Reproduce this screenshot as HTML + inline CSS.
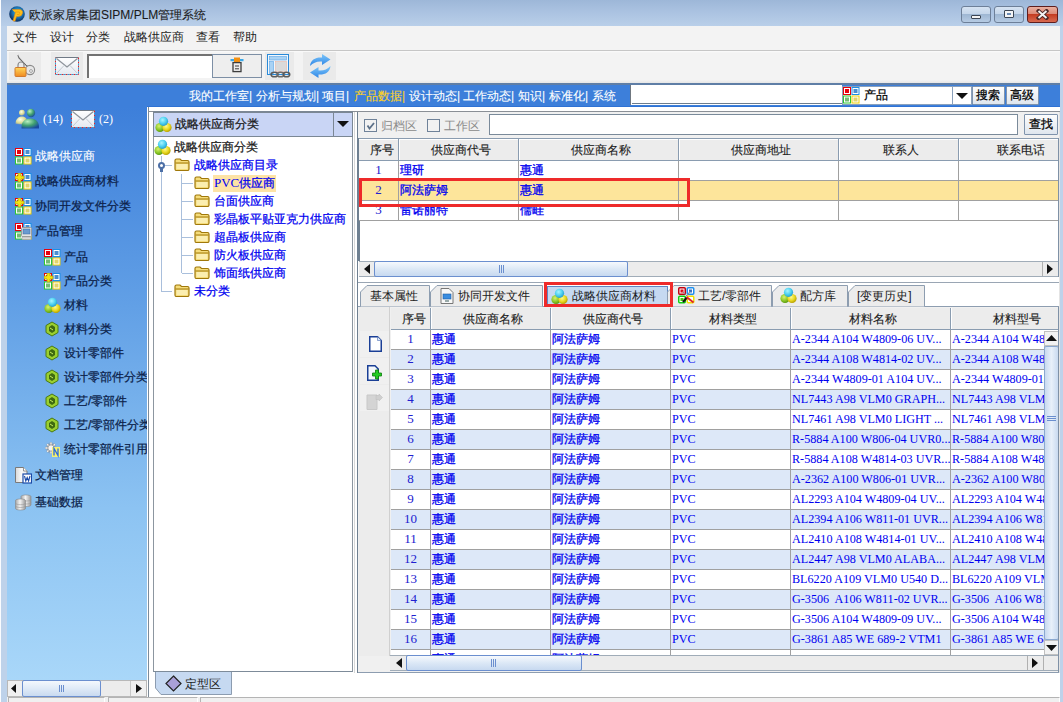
<!DOCTYPE html><html><head><meta charset="utf-8"><style>
*{box-sizing:border-box;margin:0;padding:0}
html,body{width:1063px;height:702px;overflow:hidden}
body{position:relative;background:#c4d8ee;font-family:"Liberation Sans",sans-serif;font-size:12px;color:#000}
.ab{position:absolute}
.t{position:absolute;white-space:nowrap;line-height:14px;font-size:12px;-webkit-text-stroke:0.25px currentColor}
.serif{font-family:"Liberation Serif",serif;-webkit-text-stroke:0}
.ts{font-size:13px;transform:scaleX(0.935);transform-origin:0 0}
.cj{-webkit-text-stroke:0.3px currentColor}
</style></head><body>
<svg width="0" height="0" style="position:absolute"><defs><radialGradient id="gG" cx="40%" cy="35%" r="65%"><stop offset="0" stop-color="#d8f070"/><stop offset="0.6" stop-color="#8cc828"/><stop offset="1" stop-color="#5a9a10"/></radialGradient><radialGradient id="gY" cx="40%" cy="35%" r="65%"><stop offset="0" stop-color="#fffa90"/><stop offset="0.6" stop-color="#e8d820"/><stop offset="1" stop-color="#b8a000"/></radialGradient><radialGradient id="gC" cx="40%" cy="35%" r="65%"><stop offset="0" stop-color="#a8f4ff"/><stop offset="0.6" stop-color="#4cd0f0"/><stop offset="1" stop-color="#2aa0d0"/></radialGradient></defs></svg>
<div class="ab" style="left:0;top:0;width:1063px;height:702px;background:#bed2ea"></div>
<div class="ab" style="left:0;top:0;width:1063px;height:26px;background:linear-gradient(180deg,#9db7d8 0,#a9c1e0 40%,#b9cfe9 100%)"></div>
<div class="ab" style="left:0;top:0;width:1px;height:702px;background:#fafcff"></div>
<svg class="ab" style="left:9px;top:6px" width="16" height="16" viewBox="0 0 16 16"><defs><radialGradient id="lg" cx="55%" cy="40%" r="60%"><stop offset="0" stop-color="#33c8f0"/><stop offset="0.6" stop-color="#1a6aa8"/><stop offset="1" stop-color="#0a2a5a"/></radialGradient></defs><circle cx="8" cy="8" r="7.8" fill="url(#lg)"/><path d="M3 3.5 H10 Q14 3.5 13.5 7 Q13 10.5 9 10.5 H7.5 L6 15 H4 L6.5 6 H9.5 Q11 6 10.8 7.5 Q10.6 8.5 9.5 8.5 H8" fill="#fcc01a" stroke="#e88a10" stroke-width="0.6"/></svg>
<div class="t" style="left:29px;top:8px;color:#1b1b1b;-webkit-text-stroke:0.1px currentColor">欧派家居集团SIPM/PLM管理系统</div>
<div class="ab" style="left:961px;top:6px;width:30px;height:17px;border:1px solid #6d7f98;border-radius:3px;background:linear-gradient(#d6e3f2 0,#c5d6ea 45%,#9fb7d3 50%,#b6cbe3 100%)"></div>
<div class="ab" style="left:994px;top:6px;width:30px;height:17px;border:1px solid #6d7f98;border-radius:3px;background:linear-gradient(#d6e3f2 0,#c5d6ea 45%,#9fb7d3 50%,#b6cbe3 100%)"></div>
<div class="ab" style="left:1027px;top:6px;width:31px;height:17px;border:1px solid #5e1e1e;border-radius:3px;background:linear-gradient(#eab0a0 0,#dc8a78 45%,#c43c22 50%,#d86a50 100%)"></div>
<div class="ab" style="left:971px;top:15px;width:10px;height:4px;background:#f4f4f4;border:1px solid #3c4654;border-radius:1px"></div>
<div class="ab" style="left:1004px;top:10px;width:10px;height:8px;background:#f4f4f4;border:1px solid #3c4654;border-radius:1px"></div>
<div class="ab" style="left:1007px;top:13px;width:4px;height:2px;background:#6c8cb4"></div>
<svg class="ab" style="left:1036px;top:9px" width="13" height="11" viewBox="0 0 13 11"><path d="M2.5 2 L10.5 9 M10.5 2 L2.5 9" stroke="#4a2626" stroke-width="3.8" stroke-linecap="square"/><path d="M2.5 2 L10.5 9 M10.5 2 L2.5 9" stroke="#f4f4f4" stroke-width="2"/></svg>
<div class="ab" style="left:7px;top:26px;width:1053px;height:25px;background:#f3f3f3;border-bottom:1px solid #c6c6c6"></div>
<div class="t" style="left:13px;top:30px;color:#1e1e1e;-webkit-text-stroke:0">文件</div>
<div class="t" style="left:50px;top:30px;color:#1e1e1e;-webkit-text-stroke:0">设计</div>
<div class="t" style="left:86px;top:30px;color:#1e1e1e;-webkit-text-stroke:0">分类</div>
<div class="t" style="left:124px;top:30px;color:#1e1e1e;-webkit-text-stroke:0">战略供应商</div>
<div class="t" style="left:196px;top:30px;color:#1e1e1e;-webkit-text-stroke:0">查看</div>
<div class="t" style="left:233px;top:30px;color:#1e1e1e;-webkit-text-stroke:0">帮助</div>
<div class="ab" style="left:7px;top:51px;width:1053px;height:32px;background:linear-gradient(#fbfbfb 0,#f3f3f3 2px,#f3f3f3 29px,#e6e6e6 32px)"></div>
<div class="ab" style="left:9px;top:52px;width:32px;height:28px;background:#eaeaea"></div>
<div class="ab" style="left:51px;top:52px;width:32px;height:28px;background:#eaeaea"></div>
<div class="ab" style="left:265px;top:52px;width:29px;height:28px;background:#eaeaea"></div>
<div class="ab" style="left:303px;top:52px;width:33px;height:28px;background:#eaeaea"></div>
<svg class="ab" style="left:14px;top:54px" width="22" height="24" viewBox="0 0 22 24"><path d="M4 1 L5 4 L14 13" stroke="#6a6a6a" stroke-width="1.3" fill="none"/><path d="M4.5 1.5 L13 11" stroke="#e8e8e8" stroke-width="1" fill="none"/><circle cx="16" cy="16" r="4.6" fill="#e6e6e6" stroke="#8a8a8a" stroke-width="1.1"/><circle cx="17" cy="17" r="1.4" fill="#fff" stroke="#8a8a8a" stroke-width="0.8"/><path d="M4 13 V11 a3 3 0 0 1 6 0 v2" stroke="#8a8a8a" stroke-width="1.2" fill="none"/><defs><linearGradient id="lk" x1="0" y1="0" x2="0" y2="1"><stop offset="0" stop-color="#ffd75a"/><stop offset="1" stop-color="#f08a20"/></linearGradient></defs><rect x="1" y="13.5" width="11" height="9" rx="1" fill="url(#lk)" stroke="#d07a30" stroke-width="1"/></svg>
<svg class="ab" style="left:55px;top:57px" width="24" height="18" viewBox="0 0 24 18"><defs><linearGradient id="eg" x1="0" y1="0" x2="0" y2="1"><stop offset="0" stop-color="#ffffff"/><stop offset="1" stop-color="#e4e9f0"/></linearGradient></defs><rect x="0.5" y="0.5" width="23" height="17" fill="url(#eg)"/><path d="M0.5 17.5 V0.5 M23.5 0.5 V17.5 H0.5" fill="none" stroke="#e8202a" stroke-width="1" stroke-dasharray="2 2"/><path d="M0.5 17.5 V0.5 M23.5 0.5 V17.5 H0.5" fill="none" stroke="#2fa0d8" stroke-width="1" stroke-dasharray="2 2" stroke-dashoffset="2"/><path d="M0.5 0.5 H23.5" stroke="#707a86" stroke-width="1"/><path d="M1.5 1.5 L12 10 L22.5 1.5" fill="none" stroke="#8e949c" stroke-width="1.3"/><path d="M2 16 L9 8.5 M22 16 L15 8.5" stroke="#c4cad2" stroke-width="1"/></svg>
<div class="ab" style="left:87px;top:54px;width:126px;height:24px;background:#fff;border-top:2px solid #727272;border-left:2px solid #727272"></div>
<div class="ab" style="left:212px;top:54px;width:50px;height:24px;background:#eeeeee;border:1px solid #7d8fa5"></div>
<svg class="ab" style="left:230px;top:57px" width="14" height="16" viewBox="0 0 14 16"><rect x="0.5" y="2" width="13" height="2.2" fill="#3aa8e8"/><rect x="4" y="0.5" width="6" height="5" fill="#f39010"/><rect x="3" y="5.6" width="8" height="9" fill="#ececec" stroke="#3c3c3c" stroke-width="1.3"/><path d="M5 9 h4 M5 11.8 h4" stroke="#3c3c3c" stroke-width="1"/></svg>
<svg class="ab" style="left:267px;top:54px" width="24" height="24" viewBox="0 0 24 24"><rect x="0.5" y="0.5" width="21" height="20" fill="#f2f7fc" stroke="#2a8ad8"/><rect x="2.5" y="2.5" width="17" height="3.5" fill="#a9d2f4" stroke="#5aa6e6" stroke-width="0.6"/><rect x="2.5" y="7.5" width="4" height="12" fill="#a9d2f4" stroke="#5aa6e6" stroke-width="0.6"/><rect x="8.5" y="7.5" width="11" height="10" fill="#dadada" stroke="#e8b8a8" stroke-width="0.6"/><ellipse cx="7.5" cy="20.5" rx="3.4" ry="2.3" fill="none" stroke="#5a5a5a" stroke-width="1.6"/><ellipse cx="13.5" cy="20.5" rx="3.4" ry="2.3" fill="none" stroke="#6a6a6a" stroke-width="1.6"/><ellipse cx="19.5" cy="20.5" rx="3.2" ry="2.3" fill="none" stroke="#5a5a5a" stroke-width="1.6"/></svg>
<svg class="ab" style="left:309px;top:54px" width="23" height="24" viewBox="0 0 23 24"><defs><linearGradient id="rf" x1="0" y1="0" x2="0" y2="1"><stop offset="0" stop-color="#7cc6fa"/><stop offset="1" stop-color="#2f86e6"/></linearGradient></defs><path d="M1 12 C1.5 5.5 7 3 13 3.5 L13 0 L21.5 5.5 L13 11 L13 7.5 C8 7 4.5 8.5 1 12 Z" fill="url(#rf)"/><path d="M21.5 12 C21 18.5 15.5 21 9.5 20.5 L9.5 24 L1 18.5 L9.5 13 L9.5 16.5 C14.5 17 18 15.5 21.5 12 Z" fill="url(#rf)"/></svg>
<div class="ab" style="left:7px;top:83px;width:1053px;height:2px;background:#5f7ea6"></div>
<div class="ab" style="left:7px;top:85px;width:1053px;height:22px;background:#3d7fda"></div>
<div class="ab" style="left:147px;top:106px;width:913px;height:1px;background:#2f72d4"></div>
<div class="ab" style="left:7px;top:107px;width:140px;height:573px;background:linear-gradient(#3d7fda 0%,#62a0e6 35%,#8cc3f2 70%,#a9d7f9 100%)"></div>
<div class="ab" style="left:147px;top:107px;width:913px;height:591px;background:#fff"></div>
<div class="t" style="left:189px;top:89px;color:#fff;-webkit-text-stroke:0.1px currentColor">我的工作室|</div>
<div class="t" style="left:256px;top:89px;color:#fff;-webkit-text-stroke:0.1px currentColor">分析与规划|</div>
<div class="t" style="left:322px;top:89px;color:#fff;-webkit-text-stroke:0.1px currentColor">项目|</div>
<div class="t" style="left:354px;top:89px;color:#ffd21c;-webkit-text-stroke:0.1px currentColor">产品数据|</div>
<div class="t" style="left:409px;top:89px;color:#fff;-webkit-text-stroke:0.1px currentColor">设计动态|</div>
<div class="t" style="left:463px;top:89px;color:#fff;-webkit-text-stroke:0.1px currentColor">工作动态|</div>
<div class="t" style="left:518px;top:89px;color:#fff;-webkit-text-stroke:0.1px currentColor">知识|</div>
<div class="t" style="left:549px;top:89px;color:#fff;-webkit-text-stroke:0.1px currentColor">标准化|</div>
<div class="t" style="left:592px;top:89px;color:#fff;-webkit-text-stroke:0.1px currentColor">系统</div>
<div class="ab" style="left:630px;top:85px;width:212px;height:20px;background:#fff;border-left:1px solid #6f7780"></div>
<div class="ab" style="left:632px;top:103px;width:210px;height:1px;background:#6d7d8e"></div>
<div class="ab" style="left:842px;top:86px;width:130px;height:19px;background:#fff;border:1px solid #8aa0bb"></div>
<svg class="ab" style="left:843px;top:87px" width="17" height="17" viewBox="0 0 17 17"><rect x="0" y="0" width="8" height="8" fill="#e8000c"/><rect x="1" y="1" width="6" height="6" fill="#fff"/><rect x="2" y="2" width="4" height="4" fill="#e8000c"/><rect x="8.5" y="0" width="8" height="8" fill="#1c8ee6"/><rect x="9.5" y="1" width="6" height="6" fill="#fff"/><rect x="10.5" y="2" width="4" height="4" fill="#4a8ed0"/><rect x="0" y="8.5" width="8" height="8" fill="#2ec82e"/><rect x="1" y="9.5" width="6" height="6" fill="#fff"/><rect x="2" y="10.5" width="4" height="4" fill="#74bc74"/><rect x="8.5" y="8.5" width="8" height="8" fill="#f2d000"/><rect x="9.5" y="9.5" width="6" height="6" fill="#fff"/><rect x="10.5" y="10.5" width="4" height="4" fill="#e2d46a"/></svg>
<div class="t" style="left:864px;top:88px;color:#000">产品</div>
<div class="ab" style="left:952px;top:86px;width:20px;height:19px;background:#fff;border:1px solid #8aa0bb"></div>
<svg class="ab" style="left:955px;top:92px" width="14" height="8" viewBox="0 0 14 8"><path d="M1 1 L13 1 L7 7 Z" fill="#111"/></svg>
<div class="ab" style="left:972px;top:86px;width:33px;height:19px;background:linear-gradient(#fdfdfd,#dfe6ee);border:1px solid #7f93ac;border-radius:1px"></div>
<div class="t" style="left:976px;top:88px;color:#000">搜索</div>
<div class="ab" style="left:1006px;top:86px;width:33px;height:19px;background:linear-gradient(#fdfdfd,#dfe6ee);border:1px solid #7f93ac;border-radius:1px"></div>
<div class="t" style="left:1010px;top:88px;color:#000">高级</div>
<svg class="ab" style="left:14px;top:108px" width="26" height="22" viewBox="0 0 26 22"><defs><radialGradient id="uG" cx="35%" cy="30%" r="75%"><stop offset="0" stop-color="#b8f0c0"/><stop offset="0.55" stop-color="#40a070"/><stop offset="1" stop-color="#1a4aa0"/></radialGradient><radialGradient id="uY" cx="40%" cy="35%" r="70%"><stop offset="0" stop-color="#ffffe8"/><stop offset="0.6" stop-color="#d8d890"/><stop offset="1" stop-color="#5a80c0"/></radialGradient></defs><path d="M1.5 16 C1.5 11 4.5 8.5 8 8.5 C11.5 8.5 13.5 11 13.5 14 L13.5 17 Z" fill="url(#uY)"/><circle cx="8" cy="4.8" r="3" fill="url(#uY)"/><path d="M7.5 20.5 C7 13.5 11 10.5 16.5 10.5 C22 10.5 25.5 14 25 20.5 Z" fill="url(#uG)"/><circle cx="17" cy="5" r="4.2" fill="url(#uG)"/></svg>
<div class="t serif" style="left:43px;top:112px;color:#fff;font-size:12px">(14)</div>
<svg class="ab" style="left:71px;top:110px" width="24" height="18" viewBox="0 0 24 18"><defs><linearGradient id="eg" x1="0" y1="0" x2="0" y2="1"><stop offset="0" stop-color="#ffffff"/><stop offset="1" stop-color="#e4e9f0"/></linearGradient></defs><rect x="0.5" y="0.5" width="23" height="17" fill="url(#eg)"/><path d="M0.5 17.5 V0.5 M23.5 0.5 V17.5 H0.5" fill="none" stroke="#e8202a" stroke-width="1" stroke-dasharray="2 2"/><path d="M0.5 17.5 V0.5 M23.5 0.5 V17.5 H0.5" fill="none" stroke="#2fa0d8" stroke-width="1" stroke-dasharray="2 2" stroke-dashoffset="2"/><path d="M0.5 0.5 H23.5" stroke="#707a86" stroke-width="1"/><path d="M1.5 1.5 L12 10 L22.5 1.5" fill="none" stroke="#8e949c" stroke-width="1.3"/><path d="M2 16 L9 8.5 M22 16 L15 8.5" stroke="#c4cad2" stroke-width="1"/></svg>
<div class="t serif" style="left:99px;top:112px;color:#fff;font-size:12px">(2)</div>
<div class="ab" style="left:7px;top:107px;width:140px;height:573px;overflow:hidden">
<svg class="ab" style="left:8px;top:41px" width="17" height="17" viewBox="0 0 17 17"><rect x="0" y="0" width="8" height="8" fill="#e8000c"/><rect x="1" y="1" width="6" height="6" fill="#fff"/><rect x="2" y="2" width="4" height="4" fill="#e8000c"/><rect x="8.5" y="0" width="8" height="8" fill="#1c8ee6"/><rect x="9.5" y="1" width="6" height="6" fill="#fff"/><rect x="10.5" y="2" width="4" height="4" fill="#4a8ed0"/><rect x="0" y="8.5" width="8" height="8" fill="#2ec82e"/><rect x="1" y="9.5" width="6" height="6" fill="#fff"/><rect x="2" y="10.5" width="4" height="4" fill="#74bc74"/><rect x="8.5" y="8.5" width="8" height="8" fill="#f2d000"/><rect x="9.5" y="9.5" width="6" height="6" fill="#fff"/><rect x="10.5" y="10.5" width="4" height="4" fill="#e2d46a"/></svg>
<div class="t" style="left:28px;top:42px;color:#fff;-webkit-text-stroke:0.1px #fff">战略供应商</div>
<svg class="ab" style="left:8px;top:66px" width="17" height="17" viewBox="0 0 17 17"><rect x="0" y="0" width="8" height="8" fill="#e8000c"/><rect x="1" y="1" width="6" height="6" fill="#fff"/><rect x="2" y="2" width="4" height="4" fill="#e8000c"/><rect x="8.5" y="0" width="8" height="8" fill="#1c8ee6"/><rect x="9.5" y="1" width="6" height="6" fill="#fff"/><rect x="10.5" y="2" width="4" height="4" fill="#4a8ed0"/><rect x="0" y="8.5" width="8" height="8" fill="#2ec82e"/><rect x="1" y="9.5" width="6" height="6" fill="#fff"/><rect x="2" y="10.5" width="4" height="4" fill="#74bc74"/><rect x="8.5" y="8.5" width="8" height="8" fill="#f2d000"/><rect x="9.5" y="9.5" width="6" height="6" fill="#fff"/><rect x="10.5" y="10.5" width="4" height="4" fill="#e2d46a"/><path d="M3 0 H6 V3 H9 V6 H6 V9 H3 V6 H0 V3 H3 Z" fill="#f4e410" stroke="#a89a10" stroke-width="0.7"/></svg>
<div class="t" style="left:28px;top:67px;color:#0c1f4a">战略供应商材料</div>
<svg class="ab" style="left:8px;top:91px" width="17" height="17" viewBox="0 0 17 17"><rect x="0" y="0" width="8" height="8" fill="#e8000c"/><rect x="1" y="1" width="6" height="6" fill="#fff"/><rect x="2" y="2" width="4" height="4" fill="#e8000c"/><rect x="8.5" y="0" width="8" height="8" fill="#1c8ee6"/><rect x="9.5" y="1" width="6" height="6" fill="#fff"/><rect x="10.5" y="2" width="4" height="4" fill="#4a8ed0"/><rect x="0" y="8.5" width="8" height="8" fill="#2ec82e"/><rect x="1" y="9.5" width="6" height="6" fill="#fff"/><rect x="2" y="10.5" width="4" height="4" fill="#74bc74"/><rect x="8.5" y="8.5" width="8" height="8" fill="#f2d000"/><rect x="9.5" y="9.5" width="6" height="6" fill="#fff"/><rect x="10.5" y="10.5" width="4" height="4" fill="#e2d46a"/><path d="M3 0 H6 V3 H9 V6 H6 V9 H3 V6 H0 V3 H3 Z" fill="#f4e410" stroke="#a89a10" stroke-width="0.7"/></svg>
<div class="t" style="left:28px;top:92px;color:#0c1f4a">协同开发文件分类</div>
<svg class="ab" style="left:8px;top:116px" width="17" height="17" viewBox="0 0 17 17"><rect x="0" y="0" width="8" height="8" fill="#e8000c"/><rect x="1" y="1" width="6" height="6" fill="#fff"/><rect x="2" y="2" width="4" height="4" fill="#e8000c"/><rect x="8.5" y="0" width="8" height="8" fill="#1c8ee6"/><rect x="9.5" y="1" width="6" height="6" fill="#fff"/><rect x="10.5" y="2" width="4" height="4" fill="#4a8ed0"/><rect x="0" y="8.5" width="8" height="8" fill="#2ec82e"/><rect x="1" y="9.5" width="6" height="6" fill="#fff"/><rect x="2" y="10.5" width="4" height="4" fill="#74bc74"/><rect x="8.5" y="8.5" width="8" height="8" fill="#f2d000"/><rect x="9.5" y="9.5" width="6" height="6" fill="#fff"/><rect x="10.5" y="10.5" width="4" height="4" fill="#e2d46a"/></svg>
<svg class="ab" style="left:14px;top:120px" width="11" height="13" viewBox="0 0 11 13"><rect x="0.5" y="0.5" width="10" height="9" rx="1" fill="#e4e4e4" stroke="#9a9a9a"/><rect x="2" y="2" width="7" height="5" fill="#6a9ad0" stroke="#3a6aa0" stroke-width="0.5"/><rect x="1" y="10" width="9" height="2.5" fill="#d8d8d8" stroke="#a0a0a0" stroke-width="0.5"/></svg>
<div class="t" style="left:28px;top:117px;color:#0c1f4a">产品管理</div>
<svg class="ab" style="left:37px;top:142px" width="17" height="17" viewBox="0 0 17 17"><rect x="0" y="0" width="8" height="8" fill="#e8000c"/><rect x="1" y="1" width="6" height="6" fill="#fff"/><rect x="2" y="2" width="4" height="4" fill="#e8000c"/><rect x="8.5" y="0" width="8" height="8" fill="#1c8ee6"/><rect x="9.5" y="1" width="6" height="6" fill="#fff"/><rect x="10.5" y="2" width="4" height="4" fill="#4a8ed0"/><rect x="0" y="8.5" width="8" height="8" fill="#2ec82e"/><rect x="1" y="9.5" width="6" height="6" fill="#fff"/><rect x="2" y="10.5" width="4" height="4" fill="#74bc74"/><rect x="8.5" y="8.5" width="8" height="8" fill="#f2d000"/><rect x="9.5" y="9.5" width="6" height="6" fill="#fff"/><rect x="10.5" y="10.5" width="4" height="4" fill="#e2d46a"/></svg>
<div class="t" style="left:57px;top:143px;color:#0c1f4a">产品</div>
<svg class="ab" style="left:37px;top:166px" width="17" height="17" viewBox="0 0 17 17"><rect x="0" y="0" width="8" height="8" fill="#e8000c"/><rect x="1" y="1" width="6" height="6" fill="#fff"/><rect x="2" y="2" width="4" height="4" fill="#e8000c"/><rect x="8.5" y="0" width="8" height="8" fill="#1c8ee6"/><rect x="9.5" y="1" width="6" height="6" fill="#fff"/><rect x="10.5" y="2" width="4" height="4" fill="#4a8ed0"/><rect x="0" y="8.5" width="8" height="8" fill="#2ec82e"/><rect x="1" y="9.5" width="6" height="6" fill="#fff"/><rect x="2" y="10.5" width="4" height="4" fill="#74bc74"/><rect x="8.5" y="8.5" width="8" height="8" fill="#f2d000"/><rect x="9.5" y="9.5" width="6" height="6" fill="#fff"/><rect x="10.5" y="10.5" width="4" height="4" fill="#e2d46a"/><path d="M3 0 H6 V3 H9 V6 H6 V9 H3 V6 H0 V3 H3 Z" fill="#f4e410" stroke="#a89a10" stroke-width="0.7"/></svg>
<div class="t" style="left:57px;top:167px;color:#0c1f4a">产品分类</div>
<svg class="ab" style="left:37px;top:190px" width="17" height="17" viewBox="0 0 17 17"><circle cx="5" cy="11.5" r="4.6" fill="url(#gG)"/><circle cx="12" cy="11.5" r="4.6" fill="url(#gY)"/><circle cx="8.5" cy="5.3" r="4.6" fill="url(#gC)"/></svg>
<div class="t" style="left:57px;top:191px;color:#0c1f4a">材料</div>
<svg class="ab" style="left:37px;top:214px" width="16" height="16" viewBox="0 0 16 16"><path d="M8 1 L14 4.5 L14 11.5 L8 15 L2 11.5 L2 4.5 Z" fill="#9bd030" stroke="#4a7a10" stroke-width="1"/><path d="M8 4 L11 6 L11 10 L8 12 L5 10 L5 6 Z" fill="#3f6a10"/><path d="M6 7 L9 9" stroke="#c8f060" stroke-width="1"/></svg>
<div class="t" style="left:57px;top:215px;color:#0c1f4a">材料分类</div>
<svg class="ab" style="left:37px;top:238px" width="16" height="16" viewBox="0 0 16 16"><path d="M8 1 L14 4.5 L14 11.5 L8 15 L2 11.5 L2 4.5 Z" fill="#9bd030" stroke="#4a7a10" stroke-width="1"/><path d="M8 4 L11 6 L11 10 L8 12 L5 10 L5 6 Z" fill="#3f6a10"/><path d="M6 7 L9 9" stroke="#c8f060" stroke-width="1"/></svg>
<div class="t" style="left:57px;top:239px;color:#0c1f4a">设计零部件</div>
<svg class="ab" style="left:37px;top:262px" width="16" height="16" viewBox="0 0 16 16"><path d="M8 1 L14 4.5 L14 11.5 L8 15 L2 11.5 L2 4.5 Z" fill="#9bd030" stroke="#4a7a10" stroke-width="1"/><path d="M8 4 L11 6 L11 10 L8 12 L5 10 L5 6 Z" fill="#3f6a10"/><path d="M6 7 L9 9" stroke="#c8f060" stroke-width="1"/></svg>
<div class="t" style="left:57px;top:263px;color:#0c1f4a">设计零部件分类</div>
<svg class="ab" style="left:37px;top:286px" width="16" height="16" viewBox="0 0 16 16"><path d="M8 1 L14 4.5 L14 11.5 L8 15 L2 11.5 L2 4.5 Z" fill="#9bd030" stroke="#4a7a10" stroke-width="1"/><path d="M8 4 L11 6 L11 10 L8 12 L5 10 L5 6 Z" fill="#3f6a10"/><path d="M6 7 L9 9" stroke="#c8f060" stroke-width="1"/></svg>
<div class="t" style="left:57px;top:287px;color:#0c1f4a">工艺/零部件</div>
<svg class="ab" style="left:37px;top:310px" width="16" height="16" viewBox="0 0 16 16"><path d="M8 1 L14 4.5 L14 11.5 L8 15 L2 11.5 L2 4.5 Z" fill="#9bd030" stroke="#4a7a10" stroke-width="1"/><path d="M8 4 L11 6 L11 10 L8 12 L5 10 L5 6 Z" fill="#3f6a10"/><path d="M6 7 L9 9" stroke="#c8f060" stroke-width="1"/></svg>
<div class="t" style="left:57px;top:311px;color:#0c1f4a">工艺/零部件分类</div>
<svg class="ab" style="left:38px;top:335px" width="17" height="17" viewBox="0 0 17 17"><path d="M6 0.5 V3 M6 9 V11.5 M0.5 6 H3 M9 6 H11.5 M2.2 2.2 L3.9 3.9 M8.1 8.1 L9.8 9.8 M2.2 9.8 L3.9 8.1 M8.1 3.9 L9.8 2.2" stroke="#8a8a8a" stroke-width="2.6"/><path d="M6 0.5 V3 M6 9 V11.5 M0.5 6 H3 M9 6 H11.5 M2.2 2.2 L3.9 3.9 M8.1 8.1 L9.8 9.8 M2.2 9.8 L3.9 8.1 M8.1 3.9 L9.8 2.2" stroke="#f4f4f4" stroke-width="1.4"/><circle cx="6" cy="6" r="3.2" fill="#f4f4f4" stroke="#8a8a8a" stroke-width="0.8"/><rect x="7" y="5" width="8" height="10" fill="#f4f070"/><path d="M9 13.5 V6.5 L13 13.5 V6.5" stroke="#2a6ae0" stroke-width="1.3" fill="none"/></svg>
<div class="t" style="left:57px;top:335px;color:#0c1f4a">统计零部件引用</div>
<svg class="ab" style="left:8px;top:360px" width="17" height="17" viewBox="0 0 17 17"><defs><linearGradient id="dg" x1="0" y1="0" x2="1" y2="0"><stop offset="0" stop-color="#d8d8d8"/><stop offset="0.5" stop-color="#f8f8f8"/><stop offset="1" stop-color="#ececec"/></linearGradient></defs><path d="M0.5 0.5 H8.5 L12 4 V15.5 H0.5 Z" fill="url(#dg)" stroke="#7a7a7a"/><path d="M8.5 0.5 V4 H12" fill="#fff" stroke="#7a7a7a" stroke-width="0.8"/><rect x="8" y="7" width="8.5" height="9" fill="#fff" stroke="#1a4aa8" stroke-width="1.2"/><path d="M9.5 9 L10.8 14 L12.2 10.5 L13.6 14 L15 9" stroke="#1a4aa8" stroke-width="1.1" fill="none"/></svg>
<div class="t" style="left:28px;top:361px;color:#0c1f4a">文档管理</div>
<svg class="ab" style="left:8px;top:387px" width="17" height="17" viewBox="0 0 17 17"><defs><linearGradient id="dbg" x1="0" y1="0" x2="1" y2="0"><stop offset="0" stop-color="#a8a8a8"/><stop offset="0.45" stop-color="#f4f4f4"/><stop offset="1" stop-color="#9a9a9a"/></linearGradient></defs><path d="M6 2.5 C6 0.5 16 0.5 16 2.5 V11 C16 13 6 13 6 11 Z" fill="url(#dbg)" stroke="#888" stroke-width="0.6"/><path d="M6 5.5 C6 7.5 16 7.5 16 5.5 M6 8.5 C6 10.5 16 10.5 16 8.5" stroke="#999" fill="none" stroke-width="0.6"/><path d="M0.5 6.5 C0.5 4.5 10.5 4.5 10.5 6.5 V14.5 C10.5 16.5 0.5 16.5 0.5 14.5 Z" fill="url(#dbg)" stroke="#888" stroke-width="0.6"/><path d="M0.5 9.2 C0.5 11.2 10.5 11.2 10.5 9.2 M0.5 12 C0.5 14 10.5 14 10.5 12" stroke="#999" fill="none" stroke-width="0.6"/></svg>
<div class="t" style="left:28px;top:388px;color:#0c1f4a">基础数据</div>
</div>
<div class="ab" style="left:7px;top:680px;width:140px;height:17px;background:#ececec;border:1px solid #b8b8b8"></div>
<div class="ab" style="left:8px;top:681px;width:14px;height:15px;background:#f0f0f0"></div>
<svg class="ab" style="left:11px;top:684px" width="6" height="9" viewBox="0 0 6 9"><path d="M5 0 L0 4.5 L5 9 Z" fill="#111"/></svg>
<div class="ab" style="left:22px;top:680px;width:79px;height:17px;background:linear-gradient(#f4f8fd,#dfeaf7 50%,#c9daf0);border:1px solid #6b8fcf;border-radius:2px"></div>
<div class="ab" style="left:59px;top:685px;width:5px;height:7px;border-left:1px solid #6b8fcf;border-right:1px solid #6b8fcf"></div><div class="ab" style="left:61px;top:685px;width:1px;height:7px;background:#6b8fcf"></div>
<div class="ab" style="left:130px;top:681px;width:16px;height:15px;background:#f0f0f0;border-left:1px solid #c8c8c8"></div>
<svg class="ab" style="left:136px;top:684px" width="6" height="9" viewBox="0 0 6 9"><path d="M0 0 L6 4.5 L0 9 Z" fill="#111"/></svg>
<div class="ab" style="left:7px;top:697px;width:1053px;height:5px;background:#f0f0f0"></div>
<div class="ab" style="left:8px;top:697px;width:97px;height:5px;border-top:1px solid #b4b4b4;border-left:1px solid #b4b4b4;border-right:1px solid #fff;background:#f0f0f0"></div>
<div class="ab" style="left:108px;top:697px;width:90px;height:5px;border-top:1px solid #b4b4b4;border-left:1px solid #b4b4b4;border-right:1px solid #fff;background:#f0f0f0"></div>
<div class="ab" style="left:200px;top:697px;width:860px;height:5px;border-top:1px solid #b4b4b4;border-left:1px solid #b4b4b4;border-right:1px solid #fff;background:#f0f0f0"></div>
<div class="ab" style="left:148px;top:107px;width:1px;height:590px;background:#7d8b99"></div>
<div class="ab" style="left:148px;top:111px;width:205px;height:1px;background:#8a8f96"></div>
<div class="ab" style="left:153px;top:111px;width:200px;height:26px;background:#c9d5f5;border:1px solid #7b8794;border-top:2px solid #7b8794"></div>
<div class="ab" style="left:333px;top:112px;width:1px;height:24px;background:#7b8794"></div>
<svg class="ab" style="left:336px;top:120px" width="14" height="8" viewBox="0 0 14 8"><path d="M1 1 L13 1 L7 7 Z" fill="#111"/></svg>
<svg class="ab" style="left:155px;top:116px" width="17" height="17" viewBox="0 0 17 17"><circle cx="5" cy="11.5" r="4.6" fill="url(#gG)"/><circle cx="12" cy="11.5" r="4.6" fill="url(#gY)"/><circle cx="8.5" cy="5.3" r="4.6" fill="url(#gC)"/></svg>
<div class="t" style="left:175px;top:117px;color:#1b1b1b">战略供应商分类</div>
<div class="ab" style="left:153px;top:137px;width:200px;height:535px;background:#fff;border:1px solid #8c96a0;border-top:none;border-bottom:1px solid #7d8b99"></div>
<svg class="ab" style="left:154px;top:139px" width="17" height="17" viewBox="0 0 17 17"><circle cx="5" cy="11.5" r="4.6" fill="url(#gG)"/><circle cx="12" cy="11.5" r="4.6" fill="url(#gY)"/><circle cx="8.5" cy="5.3" r="4.6" fill="url(#gC)"/></svg>
<div class="t" style="left:174px;top:140px;color:#1b1b1b">战略供应商分类</div>
<div class="ab" style="left:161px;top:156px;width:1px;height:136px;background:#a9bfdc"></div>
<div class="ab" style="left:161px;top:291px;width:11px;height:1px;background:#a9bfdc"></div>
<div class="ab" style="left:165px;top:165px;width:7px;height:1px;background:#a9bfdc"></div>
<div class="ab" style="left:158px;top:162px;width:7px;height:7px;border:2px solid #4c6fa6;border-radius:50%;background:#fff"></div>
<div class="ab" style="left:160px;top:168px;width:3px;height:4px;background:#4c6fa6"></div>
<div class="ab" style="left:181px;top:174px;width:1px;height:99px;background:#a9bfdc"></div>
<svg class="ab" style="left:174px;top:158px" width="16" height="13" viewBox="0 0 16 13"><path d="M1 2.5 Q1 1 2.5 1 H6 L7.5 2.5 H13.5 Q15 2.5 15 4 V11 Q15 12.5 13.5 12.5 H2.5 Q1 12.5 1 11 Z" fill="#f5dc7a" stroke="#a0780a" stroke-width="1.2"/><path d="M1.5 5 H14.5" stroke="#a0780a" stroke-width="1"/><rect x="2.5" y="6" width="11" height="5" fill="#fbeeb0"/></svg>
<div class="t" style="left:194px;top:158px;color:#0000f0">战略供应商目录</div>
<div class="ab" style="left:182px;top:183px;width:11px;height:1px;background:#a9bfdc"></div>
<svg class="ab" style="left:194px;top:176px" width="16" height="13" viewBox="0 0 16 13"><path d="M1 2.5 Q1 1 2.5 1 H6 L7.5 2.5 H13.5 Q15 2.5 15 4 V11 Q15 12.5 13.5 12.5 H2.5 Q1 12.5 1 11 Z" fill="#f5dc7a" stroke="#a0780a" stroke-width="1.2"/><path d="M1.5 5 H14.5" stroke="#a0780a" stroke-width="1"/><rect x="2.5" y="6" width="11" height="5" fill="#fbeeb0"/></svg>
<div class="ab" style="left:213px;top:175px;width:63px;height:17px;background:#fde3a6"></div>
<div class="t" style="left:214px;top:176px;color:#0000f0"><span class="serif" style="font-size:13px">PVC</span>供应商</div>
<div class="ab" style="left:182px;top:201px;width:11px;height:1px;background:#a9bfdc"></div>
<svg class="ab" style="left:194px;top:194px" width="16" height="13" viewBox="0 0 16 13"><path d="M1 2.5 Q1 1 2.5 1 H6 L7.5 2.5 H13.5 Q15 2.5 15 4 V11 Q15 12.5 13.5 12.5 H2.5 Q1 12.5 1 11 Z" fill="#f5dc7a" stroke="#a0780a" stroke-width="1.2"/><path d="M1.5 5 H14.5" stroke="#a0780a" stroke-width="1"/><rect x="2.5" y="6" width="11" height="5" fill="#fbeeb0"/></svg>
<div class="t" style="left:214px;top:194px;color:#0000f0">台面供应商</div>
<div class="ab" style="left:182px;top:219px;width:11px;height:1px;background:#a9bfdc"></div>
<svg class="ab" style="left:194px;top:212px" width="16" height="13" viewBox="0 0 16 13"><path d="M1 2.5 Q1 1 2.5 1 H6 L7.5 2.5 H13.5 Q15 2.5 15 4 V11 Q15 12.5 13.5 12.5 H2.5 Q1 12.5 1 11 Z" fill="#f5dc7a" stroke="#a0780a" stroke-width="1.2"/><path d="M1.5 5 H14.5" stroke="#a0780a" stroke-width="1"/><rect x="2.5" y="6" width="11" height="5" fill="#fbeeb0"/></svg>
<div class="t" style="left:214px;top:212px;color:#0000f0">彩晶板平贴亚克力供应商</div>
<div class="ab" style="left:182px;top:237px;width:11px;height:1px;background:#a9bfdc"></div>
<svg class="ab" style="left:194px;top:230px" width="16" height="13" viewBox="0 0 16 13"><path d="M1 2.5 Q1 1 2.5 1 H6 L7.5 2.5 H13.5 Q15 2.5 15 4 V11 Q15 12.5 13.5 12.5 H2.5 Q1 12.5 1 11 Z" fill="#f5dc7a" stroke="#a0780a" stroke-width="1.2"/><path d="M1.5 5 H14.5" stroke="#a0780a" stroke-width="1"/><rect x="2.5" y="6" width="11" height="5" fill="#fbeeb0"/></svg>
<div class="t" style="left:214px;top:230px;color:#0000f0">超晶板供应商</div>
<div class="ab" style="left:182px;top:255px;width:11px;height:1px;background:#a9bfdc"></div>
<svg class="ab" style="left:194px;top:248px" width="16" height="13" viewBox="0 0 16 13"><path d="M1 2.5 Q1 1 2.5 1 H6 L7.5 2.5 H13.5 Q15 2.5 15 4 V11 Q15 12.5 13.5 12.5 H2.5 Q1 12.5 1 11 Z" fill="#f5dc7a" stroke="#a0780a" stroke-width="1.2"/><path d="M1.5 5 H14.5" stroke="#a0780a" stroke-width="1"/><rect x="2.5" y="6" width="11" height="5" fill="#fbeeb0"/></svg>
<div class="t" style="left:214px;top:248px;color:#0000f0">防火板供应商</div>
<div class="ab" style="left:182px;top:273px;width:11px;height:1px;background:#a9bfdc"></div>
<svg class="ab" style="left:194px;top:266px" width="16" height="13" viewBox="0 0 16 13"><path d="M1 2.5 Q1 1 2.5 1 H6 L7.5 2.5 H13.5 Q15 2.5 15 4 V11 Q15 12.5 13.5 12.5 H2.5 Q1 12.5 1 11 Z" fill="#f5dc7a" stroke="#a0780a" stroke-width="1.2"/><path d="M1.5 5 H14.5" stroke="#a0780a" stroke-width="1"/><rect x="2.5" y="6" width="11" height="5" fill="#fbeeb0"/></svg>
<div class="t" style="left:214px;top:266px;color:#0000f0">饰面纸供应商</div>
<svg class="ab" style="left:174px;top:284px" width="16" height="13" viewBox="0 0 16 13"><path d="M1 2.5 Q1 1 2.5 1 H6 L7.5 2.5 H13.5 Q15 2.5 15 4 V11 Q15 12.5 13.5 12.5 H2.5 Q1 12.5 1 11 Z" fill="#f5dc7a" stroke="#a0780a" stroke-width="1.2"/><path d="M1.5 5 H14.5" stroke="#a0780a" stroke-width="1"/><rect x="2.5" y="6" width="11" height="5" fill="#fbeeb0"/></svg>
<div class="t" style="left:194px;top:284px;color:#0000f0">未分类</div>
<div class="ab" style="left:357px;top:672px;width:703px;height:1px;background:#8c96a0"></div>
<svg class="ab" style="left:155px;top:672px" width="78" height="23" viewBox="0 0 78 23"><path d="M0.5 0 V16 L6 22.5 H76.5 V0" fill="#c6d9f1" stroke="#8c9cb0" stroke-width="1"/></svg>
<svg class="ab" style="left:165px;top:675px" width="17" height="17" viewBox="0 0 17 17"><path d="M8.5 1 L16 8.5 L8.5 16 L1 8.5 Z" fill="#a9a0d8" stroke="#222" stroke-width="1.2"/></svg>
<div class="t" style="left:185px;top:677px;color:#1b1b1b;-webkit-text-stroke:0">定型区</div>
<div class="ab" style="left:353px;top:111px;width:707px;height:1px;background:#8a8f96"></div>
<div class="ab" style="left:354px;top:112px;width:1px;height:561px;background:#d8d8d8"></div>
<div class="ab" style="left:357px;top:112px;width:703px;height:561px;background:#fff;border-left:1px solid #6f8091"></div>
<div class="ab" style="left:358px;top:112px;width:702px;height:26px;background:#f0f0f0"></div>
<div class="ab" style="left:1059px;top:112px;width:1px;height:561px;background:#e4e4e4"></div>
<div class="ab" style="left:364px;top:119px;width:13px;height:13px;border:1.5px solid #6f8299;background:#f2f2f2"></div>
<svg class="ab" style="left:366px;top:121px" width="9" height="9" viewBox="0 0 9 9"><path d="M1.5 4.5 L3.5 7.5 L8 2" stroke="#5c7088" stroke-width="1.8" fill="none"/></svg>
<div class="t" style="left:381px;top:119px;color:#8a8a8a;-webkit-text-stroke:0">归档区</div>
<div class="ab" style="left:427px;top:119px;width:13px;height:13px;border:1.5px solid #6f8299;background:#f2f2f2"></div>
<div class="t" style="left:444px;top:119px;color:#8a8a8a;-webkit-text-stroke:0">工作区</div>
<div class="ab" style="left:489px;top:114px;width:529px;height:21px;background:#fff;border:1px solid #7a8a9a"></div>
<div class="ab" style="left:1024px;top:114px;width:34px;height:21px;background:linear-gradient(#fdfdfd,#dfe6ee);border:1px solid #7f93ac;border-radius:1px"></div>
<div class="t" style="left:1029px;top:117px;color:#000">查找</div>
<div class="ab" style="left:358px;top:138px;width:701px;height:123px;background:#fff;border-left:2px solid #6f8091"></div>
<div class="ab" style="left:359px;top:138px;width:700px;height:23px;background:#ececec;border-top:1px solid #8a9cb0;border-bottom:1px solid #8a9cb0"></div>
<div class="ab" style="left:359px;top:139px;width:700px;height:1px;background:#fff"></div>
<div class="ab" style="left:398px;top:139px;width:2px;height:21px;background:#fff;border-left:1px solid #8a9cb0"></div>
<div class="t" style="left:362px;width:39px;text-align:center;top:143px;color:#1b1b1b;-webkit-text-stroke:0.12px currentColor">序号</div>
<div class="ab" style="left:518px;top:139px;width:2px;height:21px;background:#fff;border-left:1px solid #8a9cb0"></div>
<div class="t" style="left:401px;width:120px;text-align:center;top:143px;color:#1b1b1b;-webkit-text-stroke:0.12px currentColor">供应商代号</div>
<div class="ab" style="left:678px;top:139px;width:2px;height:21px;background:#fff;border-left:1px solid #8a9cb0"></div>
<div class="t" style="left:521px;width:160px;text-align:center;top:143px;color:#1b1b1b;-webkit-text-stroke:0.12px currentColor">供应商名称</div>
<div class="ab" style="left:838px;top:139px;width:2px;height:21px;background:#fff;border-left:1px solid #8a9cb0"></div>
<div class="t" style="left:681px;width:160px;text-align:center;top:143px;color:#1b1b1b;-webkit-text-stroke:0.12px currentColor">供应商地址</div>
<div class="ab" style="left:958px;top:139px;width:2px;height:21px;background:#fff;border-left:1px solid #8a9cb0"></div>
<div class="t" style="left:841px;width:120px;text-align:center;top:143px;color:#1b1b1b;-webkit-text-stroke:0.12px currentColor">联系人</div>
<div class="ab" style="left:1078px;top:139px;width:2px;height:21px;background:#fff;border-left:1px solid #8a9cb0"></div>
<div class="t" style="left:961px;width:120px;text-align:center;top:143px;color:#1b1b1b;-webkit-text-stroke:0.12px currentColor">联系电话</div>
<div class="ab" style="left:359px;top:161px;width:700px;height:20px;background:#fff;border-bottom:1px solid #a0a0a0"></div>
<div class="ab" style="left:398px;top:161px;width:1px;height:20px;background:#a0a0a0"></div>
<div class="ab" style="left:518px;top:161px;width:1px;height:20px;background:#a0a0a0"></div>
<div class="ab" style="left:678px;top:161px;width:1px;height:20px;background:#a0a0a0"></div>
<div class="ab" style="left:838px;top:161px;width:1px;height:20px;background:#a0a0a0"></div>
<div class="ab" style="left:958px;top:161px;width:1px;height:20px;background:#a0a0a0"></div>
<div class="ab" style="left:1078px;top:161px;width:1px;height:20px;background:#a0a0a0"></div>
<div class="t serif" style="left:359px;width:39px;text-align:center;top:163px;color:#2020d0;font-size:13px">1</div>
<div class="t cj" style="left:400px;top:163px;color:#0000f0">理研</div>
<div class="t cj" style="left:520px;top:163px;color:#0000f0">惠通</div>
<div class="ab" style="left:359px;top:181px;width:700px;height:20px;background:#fde59b;border-bottom:1px solid #a0a0a0"></div>
<div class="ab" style="left:398px;top:181px;width:1px;height:20px;background:#a0a0a0"></div>
<div class="ab" style="left:518px;top:181px;width:1px;height:20px;background:#a0a0a0"></div>
<div class="ab" style="left:678px;top:181px;width:1px;height:20px;background:#a0a0a0"></div>
<div class="ab" style="left:838px;top:181px;width:1px;height:20px;background:#a0a0a0"></div>
<div class="ab" style="left:958px;top:181px;width:1px;height:20px;background:#a0a0a0"></div>
<div class="ab" style="left:1078px;top:181px;width:1px;height:20px;background:#a0a0a0"></div>
<div class="t serif" style="left:359px;width:39px;text-align:center;top:183px;color:#2020d0;font-size:13px">2</div>
<div class="t cj" style="left:400px;top:183px;color:#0000f0">阿法萨姆</div>
<div class="t cj" style="left:520px;top:183px;color:#0000f0">惠通</div>
<div class="ab" style="left:359px;top:201px;width:700px;height:20px;background:#fff;border-bottom:1px solid #a0a0a0"></div>
<div class="ab" style="left:398px;top:201px;width:1px;height:20px;background:#a0a0a0"></div>
<div class="ab" style="left:518px;top:201px;width:1px;height:20px;background:#a0a0a0"></div>
<div class="ab" style="left:678px;top:201px;width:1px;height:20px;background:#a0a0a0"></div>
<div class="ab" style="left:838px;top:201px;width:1px;height:20px;background:#a0a0a0"></div>
<div class="ab" style="left:958px;top:201px;width:1px;height:20px;background:#a0a0a0"></div>
<div class="ab" style="left:1078px;top:201px;width:1px;height:20px;background:#a0a0a0"></div>
<div class="t serif" style="left:359px;width:39px;text-align:center;top:203px;color:#2020d0;font-size:13px">3</div>
<div class="t cj" style="left:400px;top:203px;color:#0000f0">雷诺丽特</div>
<div class="t cj" style="left:520px;top:203px;color:#0000f0">儒畦</div>
<div class="ab" style="left:359px;top:261px;width:700px;height:16px;background:#ececec;border-top:1px solid #a0acb8;border-bottom:1px solid #a0acb8"></div>
<svg class="ab" style="left:364px;top:264px" width="6" height="10" viewBox="0 0 6 10"><path d="M6 0 L0 5 L6 10 Z" fill="#111"/></svg>
<div class="ab" style="left:374px;top:261px;width:254px;height:16px;background:linear-gradient(#f6f9fd,#dce8f6 50%,#c7d9f0);border:1px solid #6b8fcf;border-radius:2px"></div>
<div class="ab" style="left:499px;top:265px;width:5px;height:8px;border-left:1px solid #6b8fcf;border-right:1px solid #6b8fcf"></div><div class="ab" style="left:501px;top:265px;width:1px;height:8px;background:#6b8fcf"></div>
<div class="ab" style="left:1042px;top:262px;width:1px;height:14px;background:#b0b0b0"></div>
<svg class="ab" style="left:1047px;top:264px" width="6" height="10" viewBox="0 0 6 10"><path d="M0 0 L6 5 L0 10 Z" fill="#111"/></svg>
<div class="ab" style="left:358px;top:282px;width:701px;height:1px;background:#9aa6b4"></div>
<div class="ab" style="left:358px;top:306px;width:701px;height:1px;background:#8d9db0"></div>
<svg class="ab" style="left:360px;top:285px" width="71" height="22" viewBox="0 0 71 22"><path d="M0.5 21.5 V7 L7 0.5 H69.5 V21.5" fill="#ececec" stroke="#8d9db0" stroke-width="1"/></svg>
<div class="t" style="left:370px;top:289px;color:#1b1b1b;-webkit-text-stroke:0">基本属性</div>
<svg class="ab" style="left:430px;top:285px" width="114" height="22" viewBox="0 0 114 22"><path d="M0.5 21.5 V7 L7 0.5 H112.5 V21.5" fill="#ececec" stroke="#8d9db0" stroke-width="1"/></svg>
<svg class="ab" style="left:440px;top:288px" width="14" height="16" viewBox="0 0 14 16"><path d="M1 0.5 H9 L13 4.5 V15.5 H1 Z" fill="#f8f8f8" stroke="#777"/><rect x="3" y="6" width="8" height="5" fill="#3a8de0" stroke="#1e5aa0" stroke-width="0.6"/><rect x="5" y="12" width="4" height="2" fill="#9aa"/></svg>
<div class="t" style="left:458px;top:289px;color:#1b1b1b;-webkit-text-stroke:0">协同开发文件</div>
<div class="ab" style="left:547px;top:286px;width:121px;height:19px;background:#c6d9f1;border:1px solid #5f86c4"></div>
<svg class="ab" style="left:551px;top:288px" width="17" height="17" viewBox="0 0 17 17"><circle cx="5" cy="11.5" r="4.6" fill="url(#gG)"/><circle cx="12" cy="11.5" r="4.6" fill="url(#gY)"/><circle cx="8.5" cy="5.3" r="4.6" fill="url(#gC)"/></svg>
<div class="t" style="left:572px;top:289px;color:#1b1b1b;-webkit-text-stroke:0">战略供应商材料</div>
<svg class="ab" style="left:667px;top:285px" width="106" height="22" viewBox="0 0 106 22"><path d="M0.5 21.5 V7 L7 0.5 H104.5 V21.5" fill="#ececec" stroke="#8d9db0" stroke-width="1"/></svg>
<svg class="ab" style="left:678px;top:287px" width="17" height="17" viewBox="0 0 17 17"><rect x="0.75" y="0.75" width="6.5" height="6.5" rx="1" fill="#fff" stroke="#c00010" stroke-width="1.5"/><rect x="2.5" y="2.5" width="3" height="3" fill="#e00010"/><rect x="9.25" y="0.75" width="6.5" height="6.5" rx="1" fill="#fff" stroke="#1e90f0" stroke-width="1.5"/><rect x="11" y="2.5" width="3" height="3" fill="#3a70c0"/><rect x="0.75" y="9.25" width="6.5" height="6.5" rx="1" fill="#fff" stroke="#10d010" stroke-width="1.5"/><rect x="2.5" y="11" width="3" height="3" fill="#50c010"/><rect x="9.25" y="9.25" width="6.5" height="6.5" rx="1" fill="#fff" stroke="#f0e000" stroke-width="1.5"/><path d="M4.5 4.5 L9 9 M9.5 8.5 L12 4" stroke="#8a8a8a" stroke-width="1"/><path d="M5 15 L9 10.5" stroke="#111" stroke-width="2.2"/><path d="M8.5 10 L15.5 15.5" stroke="#e02828" stroke-width="2"/></svg>
<div class="t" style="left:698px;top:289px;color:#1b1b1b;-webkit-text-stroke:0">工艺/零部件</div>
<svg class="ab" style="left:772px;top:285px" width="77" height="22" viewBox="0 0 77 22"><path d="M0.5 21.5 V7 L7 0.5 H75.5 V21.5" fill="#ececec" stroke="#8d9db0" stroke-width="1"/></svg>
<svg class="ab" style="left:780px;top:287px" width="17" height="17" viewBox="0 0 17 17"><circle cx="5" cy="11.5" r="4.6" fill="url(#gG)"/><circle cx="12" cy="11.5" r="4.6" fill="url(#gY)"/><circle cx="8.5" cy="5.3" r="4.6" fill="url(#gC)"/></svg>
<div class="t" style="left:800px;top:289px;color:#1b1b1b;-webkit-text-stroke:0">配方库</div>
<svg class="ab" style="left:848px;top:285px" width="78" height="22" viewBox="0 0 78 22"><path d="M0.5 21.5 V7 L7 0.5 H76.5 V21.5" fill="#ececec" stroke="#8d9db0" stroke-width="1"/></svg>
<div class="t" style="left:857px;top:289px;color:#1b1b1b;-webkit-text-stroke:0">[变更历史]</div>
<div class="ab" style="left:358px;top:307px;width:701px;height:366px;background:#f0f0f0;border-bottom:1px solid #8d9db0;border-right:1px solid #8d9db0"></div>
<div class="ab" style="left:359px;top:307px;width:31px;height:349px;background:#ececec;border-right:1px solid #d0d0d0"></div>
<div class="ab" style="left:360px;top:331px;width:29px;height:26px;background:#f0f0f0"></div>
<div class="ab" style="left:360px;top:358px;width:29px;height:26px;background:#f0f0f0"></div>
<div class="ab" style="left:360px;top:385px;width:29px;height:26px;background:#f0f0f0"></div>
<svg class="ab" style="left:369px;top:336px" width="13" height="16" viewBox="0 0 13 16"><path d="M0.75 0.75 H8.5 L12.25 4.5 V15.25 H0.75 Z" fill="#fff" stroke="#1a3f96" stroke-width="1.5"/><path d="M8.5 0.75 V4.5 H12.25" fill="#dfe8f4" stroke="#6080c0" stroke-width="0.7"/></svg>
<svg class="ab" style="left:367px;top:365px" width="16" height="16" viewBox="0 0 16 16"><path d="M0.75 0.75 H8 L11.25 4 V15.25 H0.75 Z" fill="#f4f8fc" stroke="#1a3f96" stroke-width="1.5"/><path d="M8.5 5 h3 v3 h3 v3 h-3 v3 h-3 v-3 h-3 v-3 h3 Z" fill="#22cc22" stroke="#0a7a0a" stroke-width="0.8"/></svg>
<svg class="ab" style="left:366px;top:394px" width="17" height="16" viewBox="0 0 17 16"><path d="M1 1 H11 V15.5 H1 Z" fill="#d4d4d4" stroke="#c8c8c8"/><path d="M10 1.5 H13 V0 L16.5 3.5 L13 7 V5.5 H10 Z" fill="#cfcfcf" stroke="#c0c0c0" stroke-width="0.6"/></svg>
<div class="ab" style="left:390px;top:307px;width:669px;height:349px;overflow:hidden">
<div class="ab" style="left:1px;top:1px;width:668px;height:22px;background:#ececec;border-bottom:1px solid #8a9cb0"></div>
<div class="ab" style="left:40px;top:1px;width:2px;height:21px;background:#fff;border-left:1px solid #8a9cb0"></div>
<div class="t" style="left:4px;width:39px;text-align:center;top:5px;color:#1b1b1b;-webkit-text-stroke:0.12px currentColor">序号</div>
<div class="ab" style="left:160px;top:1px;width:2px;height:21px;background:#fff;border-left:1px solid #8a9cb0"></div>
<div class="t" style="left:43px;width:120px;text-align:center;top:5px;color:#1b1b1b;-webkit-text-stroke:0.12px currentColor">供应商名称</div>
<div class="ab" style="left:280px;top:1px;width:2px;height:21px;background:#fff;border-left:1px solid #8a9cb0"></div>
<div class="t" style="left:163px;width:120px;text-align:center;top:5px;color:#1b1b1b;-webkit-text-stroke:0.12px currentColor">供应商代号</div>
<div class="ab" style="left:400px;top:1px;width:2px;height:21px;background:#fff;border-left:1px solid #8a9cb0"></div>
<div class="t" style="left:283px;width:120px;text-align:center;top:5px;color:#1b1b1b;-webkit-text-stroke:0.12px currentColor">材料类型</div>
<div class="ab" style="left:560px;top:1px;width:2px;height:21px;background:#fff;border-left:1px solid #8a9cb0"></div>
<div class="t" style="left:403px;width:160px;text-align:center;top:5px;color:#1b1b1b;-webkit-text-stroke:0.12px currentColor">材料名称</div>
<div class="ab" style="left:687px;top:1px;width:2px;height:21px;background:#fff;border-left:1px solid #8a9cb0"></div>
<div class="t" style="left:563px;width:127px;text-align:center;top:5px;color:#1b1b1b;-webkit-text-stroke:0.12px currentColor">材料型号</div>
<div class="ab" style="left:1px;top:23px;width:668px;height:20px;background:#fff;border-bottom:1px solid #a0a0a0"></div>
<div class="ab" style="left:40px;top:23px;width:1px;height:20px;background:#a0a0a0"></div>
<div class="ab" style="left:160px;top:23px;width:1px;height:20px;background:#a0a0a0"></div>
<div class="ab" style="left:280px;top:23px;width:1px;height:20px;background:#a0a0a0"></div>
<div class="ab" style="left:400px;top:23px;width:1px;height:20px;background:#a0a0a0"></div>
<div class="ab" style="left:560px;top:23px;width:1px;height:20px;background:#a0a0a0"></div>
<div class="ab" style="left:687px;top:23px;width:1px;height:20px;background:#a0a0a0"></div>
<div class="t serif" style="left:1px;width:39px;text-align:center;top:25px;color:#2020d0;font-size:13px">1</div>
<div class="t cj" style="left:42px;top:25px;color:#0000f0">惠通</div>
<div class="t cj" style="left:162px;top:25px;color:#0000f0">阿法萨姆</div>
<div class="t serif ts" style="left:282px;top:25px;color:#0000f0">PVC</div>
<div class="t serif ts" style="left:402px;top:25px;color:#0000f0">A-2344 A104 W4809-06 UV...</div>
<div class="t serif ts" style="left:562px;top:25px;color:#0000f0">A-2344 A104 W4809-06</div>
<div class="ab" style="left:1px;top:43px;width:668px;height:20px;background:#dde8f8;border-bottom:1px solid #a0a0a0"></div>
<div class="ab" style="left:40px;top:43px;width:1px;height:20px;background:#a0a0a0"></div>
<div class="ab" style="left:160px;top:43px;width:1px;height:20px;background:#a0a0a0"></div>
<div class="ab" style="left:280px;top:43px;width:1px;height:20px;background:#a0a0a0"></div>
<div class="ab" style="left:400px;top:43px;width:1px;height:20px;background:#a0a0a0"></div>
<div class="ab" style="left:560px;top:43px;width:1px;height:20px;background:#a0a0a0"></div>
<div class="ab" style="left:687px;top:43px;width:1px;height:20px;background:#a0a0a0"></div>
<div class="t serif" style="left:1px;width:39px;text-align:center;top:45px;color:#2020d0;font-size:13px">2</div>
<div class="t cj" style="left:42px;top:45px;color:#0000f0">惠通</div>
<div class="t cj" style="left:162px;top:45px;color:#0000f0">阿法萨姆</div>
<div class="t serif ts" style="left:282px;top:45px;color:#0000f0">PVC</div>
<div class="t serif ts" style="left:402px;top:45px;color:#0000f0">A-2344 A108 W4814-02 UV...</div>
<div class="t serif ts" style="left:562px;top:45px;color:#0000f0">A-2344 A108 W4814-02</div>
<div class="ab" style="left:1px;top:63px;width:668px;height:20px;background:#fff;border-bottom:1px solid #a0a0a0"></div>
<div class="ab" style="left:40px;top:63px;width:1px;height:20px;background:#a0a0a0"></div>
<div class="ab" style="left:160px;top:63px;width:1px;height:20px;background:#a0a0a0"></div>
<div class="ab" style="left:280px;top:63px;width:1px;height:20px;background:#a0a0a0"></div>
<div class="ab" style="left:400px;top:63px;width:1px;height:20px;background:#a0a0a0"></div>
<div class="ab" style="left:560px;top:63px;width:1px;height:20px;background:#a0a0a0"></div>
<div class="ab" style="left:687px;top:63px;width:1px;height:20px;background:#a0a0a0"></div>
<div class="t serif" style="left:1px;width:39px;text-align:center;top:65px;color:#2020d0;font-size:13px">3</div>
<div class="t cj" style="left:42px;top:65px;color:#0000f0">惠通</div>
<div class="t cj" style="left:162px;top:65px;color:#0000f0">阿法萨姆</div>
<div class="t serif ts" style="left:282px;top:65px;color:#0000f0">PVC</div>
<div class="t serif ts" style="left:402px;top:65px;color:#0000f0">A-2344 W4809-01 A104 UV...</div>
<div class="t serif ts" style="left:562px;top:65px;color:#0000f0">A-2344 W4809-01 A104</div>
<div class="ab" style="left:1px;top:83px;width:668px;height:20px;background:#dde8f8;border-bottom:1px solid #a0a0a0"></div>
<div class="ab" style="left:40px;top:83px;width:1px;height:20px;background:#a0a0a0"></div>
<div class="ab" style="left:160px;top:83px;width:1px;height:20px;background:#a0a0a0"></div>
<div class="ab" style="left:280px;top:83px;width:1px;height:20px;background:#a0a0a0"></div>
<div class="ab" style="left:400px;top:83px;width:1px;height:20px;background:#a0a0a0"></div>
<div class="ab" style="left:560px;top:83px;width:1px;height:20px;background:#a0a0a0"></div>
<div class="ab" style="left:687px;top:83px;width:1px;height:20px;background:#a0a0a0"></div>
<div class="t serif" style="left:1px;width:39px;text-align:center;top:85px;color:#2020d0;font-size:13px">4</div>
<div class="t cj" style="left:42px;top:85px;color:#0000f0">惠通</div>
<div class="t cj" style="left:162px;top:85px;color:#0000f0">阿法萨姆</div>
<div class="t serif ts" style="left:282px;top:85px;color:#0000f0">PVC</div>
<div class="t serif ts" style="left:402px;top:85px;color:#0000f0">NL7443 A98 VLM0 GRAPH...</div>
<div class="t serif ts" style="left:562px;top:85px;color:#0000f0">NL7443 A98 VLM0 GRAPH</div>
<div class="ab" style="left:1px;top:103px;width:668px;height:20px;background:#fff;border-bottom:1px solid #a0a0a0"></div>
<div class="ab" style="left:40px;top:103px;width:1px;height:20px;background:#a0a0a0"></div>
<div class="ab" style="left:160px;top:103px;width:1px;height:20px;background:#a0a0a0"></div>
<div class="ab" style="left:280px;top:103px;width:1px;height:20px;background:#a0a0a0"></div>
<div class="ab" style="left:400px;top:103px;width:1px;height:20px;background:#a0a0a0"></div>
<div class="ab" style="left:560px;top:103px;width:1px;height:20px;background:#a0a0a0"></div>
<div class="ab" style="left:687px;top:103px;width:1px;height:20px;background:#a0a0a0"></div>
<div class="t serif" style="left:1px;width:39px;text-align:center;top:105px;color:#2020d0;font-size:13px">5</div>
<div class="t cj" style="left:42px;top:105px;color:#0000f0">惠通</div>
<div class="t cj" style="left:162px;top:105px;color:#0000f0">阿法萨姆</div>
<div class="t serif ts" style="left:282px;top:105px;color:#0000f0">PVC</div>
<div class="t serif ts" style="left:402px;top:105px;color:#0000f0">NL7461 A98 VLM0 LIGHT ...</div>
<div class="t serif ts" style="left:562px;top:105px;color:#0000f0">NL7461 A98 VLM0 LIGHT</div>
<div class="ab" style="left:1px;top:123px;width:668px;height:20px;background:#dde8f8;border-bottom:1px solid #a0a0a0"></div>
<div class="ab" style="left:40px;top:123px;width:1px;height:20px;background:#a0a0a0"></div>
<div class="ab" style="left:160px;top:123px;width:1px;height:20px;background:#a0a0a0"></div>
<div class="ab" style="left:280px;top:123px;width:1px;height:20px;background:#a0a0a0"></div>
<div class="ab" style="left:400px;top:123px;width:1px;height:20px;background:#a0a0a0"></div>
<div class="ab" style="left:560px;top:123px;width:1px;height:20px;background:#a0a0a0"></div>
<div class="ab" style="left:687px;top:123px;width:1px;height:20px;background:#a0a0a0"></div>
<div class="t serif" style="left:1px;width:39px;text-align:center;top:125px;color:#2020d0;font-size:13px">6</div>
<div class="t cj" style="left:42px;top:125px;color:#0000f0">惠通</div>
<div class="t cj" style="left:162px;top:125px;color:#0000f0">阿法萨姆</div>
<div class="t serif ts" style="left:282px;top:125px;color:#0000f0">PVC</div>
<div class="t serif ts" style="left:402px;top:125px;color:#0000f0">R-5884 A100 W806-04 UVR0...</div>
<div class="t serif ts" style="left:562px;top:125px;color:#0000f0">R-5884 A100 W806-04</div>
<div class="ab" style="left:1px;top:143px;width:668px;height:20px;background:#fff;border-bottom:1px solid #a0a0a0"></div>
<div class="ab" style="left:40px;top:143px;width:1px;height:20px;background:#a0a0a0"></div>
<div class="ab" style="left:160px;top:143px;width:1px;height:20px;background:#a0a0a0"></div>
<div class="ab" style="left:280px;top:143px;width:1px;height:20px;background:#a0a0a0"></div>
<div class="ab" style="left:400px;top:143px;width:1px;height:20px;background:#a0a0a0"></div>
<div class="ab" style="left:560px;top:143px;width:1px;height:20px;background:#a0a0a0"></div>
<div class="ab" style="left:687px;top:143px;width:1px;height:20px;background:#a0a0a0"></div>
<div class="t serif" style="left:1px;width:39px;text-align:center;top:145px;color:#2020d0;font-size:13px">7</div>
<div class="t cj" style="left:42px;top:145px;color:#0000f0">惠通</div>
<div class="t cj" style="left:162px;top:145px;color:#0000f0">阿法萨姆</div>
<div class="t serif ts" style="left:282px;top:145px;color:#0000f0">PVC</div>
<div class="t serif ts" style="left:402px;top:145px;color:#0000f0">R-5884 A108 W4814-03 UVR...</div>
<div class="t serif ts" style="left:562px;top:145px;color:#0000f0">R-5884 A108 W4814-03</div>
<div class="ab" style="left:1px;top:163px;width:668px;height:20px;background:#dde8f8;border-bottom:1px solid #a0a0a0"></div>
<div class="ab" style="left:40px;top:163px;width:1px;height:20px;background:#a0a0a0"></div>
<div class="ab" style="left:160px;top:163px;width:1px;height:20px;background:#a0a0a0"></div>
<div class="ab" style="left:280px;top:163px;width:1px;height:20px;background:#a0a0a0"></div>
<div class="ab" style="left:400px;top:163px;width:1px;height:20px;background:#a0a0a0"></div>
<div class="ab" style="left:560px;top:163px;width:1px;height:20px;background:#a0a0a0"></div>
<div class="ab" style="left:687px;top:163px;width:1px;height:20px;background:#a0a0a0"></div>
<div class="t serif" style="left:1px;width:39px;text-align:center;top:165px;color:#2020d0;font-size:13px">8</div>
<div class="t cj" style="left:42px;top:165px;color:#0000f0">惠通</div>
<div class="t cj" style="left:162px;top:165px;color:#0000f0">阿法萨姆</div>
<div class="t serif ts" style="left:282px;top:165px;color:#0000f0">PVC</div>
<div class="t serif ts" style="left:402px;top:165px;color:#0000f0">A-2362 A100 W806-01 UVR...</div>
<div class="t serif ts" style="left:562px;top:165px;color:#0000f0">A-2362 A100 W806-01</div>
<div class="ab" style="left:1px;top:183px;width:668px;height:20px;background:#fff;border-bottom:1px solid #a0a0a0"></div>
<div class="ab" style="left:40px;top:183px;width:1px;height:20px;background:#a0a0a0"></div>
<div class="ab" style="left:160px;top:183px;width:1px;height:20px;background:#a0a0a0"></div>
<div class="ab" style="left:280px;top:183px;width:1px;height:20px;background:#a0a0a0"></div>
<div class="ab" style="left:400px;top:183px;width:1px;height:20px;background:#a0a0a0"></div>
<div class="ab" style="left:560px;top:183px;width:1px;height:20px;background:#a0a0a0"></div>
<div class="ab" style="left:687px;top:183px;width:1px;height:20px;background:#a0a0a0"></div>
<div class="t serif" style="left:1px;width:39px;text-align:center;top:185px;color:#2020d0;font-size:13px">9</div>
<div class="t cj" style="left:42px;top:185px;color:#0000f0">惠通</div>
<div class="t cj" style="left:162px;top:185px;color:#0000f0">阿法萨姆</div>
<div class="t serif ts" style="left:282px;top:185px;color:#0000f0">PVC</div>
<div class="t serif ts" style="left:402px;top:185px;color:#0000f0">AL2293 A104 W4809-04 UV...</div>
<div class="t serif ts" style="left:562px;top:185px;color:#0000f0">AL2293 A104 W4809-04</div>
<div class="ab" style="left:1px;top:203px;width:668px;height:20px;background:#dde8f8;border-bottom:1px solid #a0a0a0"></div>
<div class="ab" style="left:40px;top:203px;width:1px;height:20px;background:#a0a0a0"></div>
<div class="ab" style="left:160px;top:203px;width:1px;height:20px;background:#a0a0a0"></div>
<div class="ab" style="left:280px;top:203px;width:1px;height:20px;background:#a0a0a0"></div>
<div class="ab" style="left:400px;top:203px;width:1px;height:20px;background:#a0a0a0"></div>
<div class="ab" style="left:560px;top:203px;width:1px;height:20px;background:#a0a0a0"></div>
<div class="ab" style="left:687px;top:203px;width:1px;height:20px;background:#a0a0a0"></div>
<div class="t serif" style="left:1px;width:39px;text-align:center;top:205px;color:#2020d0;font-size:13px">10</div>
<div class="t cj" style="left:42px;top:205px;color:#0000f0">惠通</div>
<div class="t cj" style="left:162px;top:205px;color:#0000f0">阿法萨姆</div>
<div class="t serif ts" style="left:282px;top:205px;color:#0000f0">PVC</div>
<div class="t serif ts" style="left:402px;top:205px;color:#0000f0">AL2394 A106 W811-01 UVR...</div>
<div class="t serif ts" style="left:562px;top:205px;color:#0000f0">AL2394 A106 W811-01</div>
<div class="ab" style="left:1px;top:223px;width:668px;height:20px;background:#fff;border-bottom:1px solid #a0a0a0"></div>
<div class="ab" style="left:40px;top:223px;width:1px;height:20px;background:#a0a0a0"></div>
<div class="ab" style="left:160px;top:223px;width:1px;height:20px;background:#a0a0a0"></div>
<div class="ab" style="left:280px;top:223px;width:1px;height:20px;background:#a0a0a0"></div>
<div class="ab" style="left:400px;top:223px;width:1px;height:20px;background:#a0a0a0"></div>
<div class="ab" style="left:560px;top:223px;width:1px;height:20px;background:#a0a0a0"></div>
<div class="ab" style="left:687px;top:223px;width:1px;height:20px;background:#a0a0a0"></div>
<div class="t serif" style="left:1px;width:39px;text-align:center;top:225px;color:#2020d0;font-size:13px">11</div>
<div class="t cj" style="left:42px;top:225px;color:#0000f0">惠通</div>
<div class="t cj" style="left:162px;top:225px;color:#0000f0">阿法萨姆</div>
<div class="t serif ts" style="left:282px;top:225px;color:#0000f0">PVC</div>
<div class="t serif ts" style="left:402px;top:225px;color:#0000f0">AL2410 A108 W4814-01 UV...</div>
<div class="t serif ts" style="left:562px;top:225px;color:#0000f0">AL2410 A108 W4814-01</div>
<div class="ab" style="left:1px;top:243px;width:668px;height:20px;background:#dde8f8;border-bottom:1px solid #a0a0a0"></div>
<div class="ab" style="left:40px;top:243px;width:1px;height:20px;background:#a0a0a0"></div>
<div class="ab" style="left:160px;top:243px;width:1px;height:20px;background:#a0a0a0"></div>
<div class="ab" style="left:280px;top:243px;width:1px;height:20px;background:#a0a0a0"></div>
<div class="ab" style="left:400px;top:243px;width:1px;height:20px;background:#a0a0a0"></div>
<div class="ab" style="left:560px;top:243px;width:1px;height:20px;background:#a0a0a0"></div>
<div class="ab" style="left:687px;top:243px;width:1px;height:20px;background:#a0a0a0"></div>
<div class="t serif" style="left:1px;width:39px;text-align:center;top:245px;color:#2020d0;font-size:13px">12</div>
<div class="t cj" style="left:42px;top:245px;color:#0000f0">惠通</div>
<div class="t cj" style="left:162px;top:245px;color:#0000f0">阿法萨姆</div>
<div class="t serif ts" style="left:282px;top:245px;color:#0000f0">PVC</div>
<div class="t serif ts" style="left:402px;top:245px;color:#0000f0">AL2447 A98 VLM0 ALABA...</div>
<div class="t serif ts" style="left:562px;top:245px;color:#0000f0">AL2447 A98 VLM0 ALABA</div>
<div class="ab" style="left:1px;top:263px;width:668px;height:20px;background:#fff;border-bottom:1px solid #a0a0a0"></div>
<div class="ab" style="left:40px;top:263px;width:1px;height:20px;background:#a0a0a0"></div>
<div class="ab" style="left:160px;top:263px;width:1px;height:20px;background:#a0a0a0"></div>
<div class="ab" style="left:280px;top:263px;width:1px;height:20px;background:#a0a0a0"></div>
<div class="ab" style="left:400px;top:263px;width:1px;height:20px;background:#a0a0a0"></div>
<div class="ab" style="left:560px;top:263px;width:1px;height:20px;background:#a0a0a0"></div>
<div class="ab" style="left:687px;top:263px;width:1px;height:20px;background:#a0a0a0"></div>
<div class="t serif" style="left:1px;width:39px;text-align:center;top:265px;color:#2020d0;font-size:13px">13</div>
<div class="t cj" style="left:42px;top:265px;color:#0000f0">惠通</div>
<div class="t cj" style="left:162px;top:265px;color:#0000f0">阿法萨姆</div>
<div class="t serif ts" style="left:282px;top:265px;color:#0000f0">PVC</div>
<div class="t serif ts" style="left:402px;top:265px;color:#0000f0">BL6220 A109 VLM0 U540 D...</div>
<div class="t serif ts" style="left:562px;top:265px;color:#0000f0">BL6220 A109 VLM0 U540</div>
<div class="ab" style="left:1px;top:283px;width:668px;height:20px;background:#dde8f8;border-bottom:1px solid #a0a0a0"></div>
<div class="ab" style="left:40px;top:283px;width:1px;height:20px;background:#a0a0a0"></div>
<div class="ab" style="left:160px;top:283px;width:1px;height:20px;background:#a0a0a0"></div>
<div class="ab" style="left:280px;top:283px;width:1px;height:20px;background:#a0a0a0"></div>
<div class="ab" style="left:400px;top:283px;width:1px;height:20px;background:#a0a0a0"></div>
<div class="ab" style="left:560px;top:283px;width:1px;height:20px;background:#a0a0a0"></div>
<div class="ab" style="left:687px;top:283px;width:1px;height:20px;background:#a0a0a0"></div>
<div class="t serif" style="left:1px;width:39px;text-align:center;top:285px;color:#2020d0;font-size:13px">14</div>
<div class="t cj" style="left:42px;top:285px;color:#0000f0">惠通</div>
<div class="t cj" style="left:162px;top:285px;color:#0000f0">阿法萨姆</div>
<div class="t serif ts" style="left:282px;top:285px;color:#0000f0">PVC</div>
<div class="t serif ts" style="left:402px;top:285px;color:#0000f0">G-3506&nbsp; A106 W811-02 UVR...</div>
<div class="t serif ts" style="left:562px;top:285px;color:#0000f0">G-3506&nbsp; A106 W811-02</div>
<div class="ab" style="left:1px;top:303px;width:668px;height:20px;background:#fff;border-bottom:1px solid #a0a0a0"></div>
<div class="ab" style="left:40px;top:303px;width:1px;height:20px;background:#a0a0a0"></div>
<div class="ab" style="left:160px;top:303px;width:1px;height:20px;background:#a0a0a0"></div>
<div class="ab" style="left:280px;top:303px;width:1px;height:20px;background:#a0a0a0"></div>
<div class="ab" style="left:400px;top:303px;width:1px;height:20px;background:#a0a0a0"></div>
<div class="ab" style="left:560px;top:303px;width:1px;height:20px;background:#a0a0a0"></div>
<div class="ab" style="left:687px;top:303px;width:1px;height:20px;background:#a0a0a0"></div>
<div class="t serif" style="left:1px;width:39px;text-align:center;top:305px;color:#2020d0;font-size:13px">15</div>
<div class="t cj" style="left:42px;top:305px;color:#0000f0">惠通</div>
<div class="t cj" style="left:162px;top:305px;color:#0000f0">阿法萨姆</div>
<div class="t serif ts" style="left:282px;top:305px;color:#0000f0">PVC</div>
<div class="t serif ts" style="left:402px;top:305px;color:#0000f0">G-3506 A104 W4809-09 UV...</div>
<div class="t serif ts" style="left:562px;top:305px;color:#0000f0">G-3506 A104 W4809-09</div>
<div class="ab" style="left:1px;top:323px;width:668px;height:20px;background:#dde8f8;border-bottom:1px solid #a0a0a0"></div>
<div class="ab" style="left:40px;top:323px;width:1px;height:20px;background:#a0a0a0"></div>
<div class="ab" style="left:160px;top:323px;width:1px;height:20px;background:#a0a0a0"></div>
<div class="ab" style="left:280px;top:323px;width:1px;height:20px;background:#a0a0a0"></div>
<div class="ab" style="left:400px;top:323px;width:1px;height:20px;background:#a0a0a0"></div>
<div class="ab" style="left:560px;top:323px;width:1px;height:20px;background:#a0a0a0"></div>
<div class="ab" style="left:687px;top:323px;width:1px;height:20px;background:#a0a0a0"></div>
<div class="t serif" style="left:1px;width:39px;text-align:center;top:325px;color:#2020d0;font-size:13px">16</div>
<div class="t cj" style="left:42px;top:325px;color:#0000f0">惠通</div>
<div class="t cj" style="left:162px;top:325px;color:#0000f0">阿法萨姆</div>
<div class="t serif ts" style="left:282px;top:325px;color:#0000f0">PVC</div>
<div class="t serif ts" style="left:402px;top:325px;color:#0000f0">G-3861 A85 WE 689-2 VTM1</div>
<div class="t serif ts" style="left:562px;top:325px;color:#0000f0">G-3861 A85 WE 689-2</div>
<div class="ab" style="left:1px;top:343px;width:668px;height:20px;background:#fff;border-bottom:1px solid #a0a0a0"></div>
<div class="ab" style="left:40px;top:343px;width:1px;height:20px;background:#a0a0a0"></div>
<div class="ab" style="left:160px;top:343px;width:1px;height:20px;background:#a0a0a0"></div>
<div class="ab" style="left:280px;top:343px;width:1px;height:20px;background:#a0a0a0"></div>
<div class="ab" style="left:400px;top:343px;width:1px;height:20px;background:#a0a0a0"></div>
<div class="ab" style="left:560px;top:343px;width:1px;height:20px;background:#a0a0a0"></div>
<div class="ab" style="left:687px;top:343px;width:1px;height:20px;background:#a0a0a0"></div>
<div class="t serif" style="left:1px;width:39px;text-align:center;top:345px;color:#2020d0;font-size:13px">17</div>
<div class="t cj" style="left:42px;top:345px;color:#0000f0">惠通</div>
<div class="t cj" style="left:162px;top:345px;color:#0000f0">阿法萨姆</div>
<div class="t serif ts" style="left:282px;top:345px;color:#0000f0">PVC</div>
<div class="t serif ts" style="left:402px;top:345px;color:#0000f0">G-3861 A108 W4814-03 UVR...</div>
<div class="t serif ts" style="left:562px;top:345px;color:#0000f0">G-3861 A108 W4814</div>
</div>
<div class="ab" style="left:1044px;top:331px;width:15px;height:324px;background:#ececec;border-left:1px solid #b4b4b4"></div>
<div class="ab" style="left:1044px;top:331px;width:15px;height:15px;background:#f2f2f2;border:1px solid #c0c0c0"></div>
<svg class="ab" style="left:1046px;top:335px" width="11" height="6" viewBox="0 0 11 6"><path d="M0 6 L5.5 0 L11 6 Z" fill="#111"/></svg>
<div class="ab" style="left:1044px;top:346px;width:15px;height:294px;background:linear-gradient(90deg,#c9daf0,#e8f0fa 50%,#c9daf0);border:1px solid #8aa8d0;border-radius:2px"></div>
<div class="ab" style="left:1047px;top:416px;width:9px;height:5px;border-top:1px solid #6b8fcf;border-bottom:1px solid #6b8fcf"></div><div class="ab" style="left:1047px;top:418px;width:9px;height:1px;background:#6b8fcf"></div>
<div class="ab" style="left:1044px;top:640px;width:15px;height:15px;background:#f2f2f2;border:1px solid #c0c0c0"></div>
<svg class="ab" style="left:1046px;top:645px" width="11" height="6" viewBox="0 0 11 6"><path d="M0 0 L5.5 6 L11 0 Z" fill="#111"/></svg>
<div class="ab" style="left:390px;top:655px;width:669px;height:16px;background:#ececec;border-top:1px solid #a0acb8;border-bottom:1px solid #a0acb8"></div>
<svg class="ab" style="left:396px;top:658px" width="6" height="10" viewBox="0 0 6 10"><path d="M6 0 L0 5 L6 10 Z" fill="#111"/></svg>
<div class="ab" style="left:406px;top:655px;width:176px;height:16px;background:linear-gradient(#f6f9fd,#dce8f6 50%,#c7d9f0);border:1px solid #6b8fcf;border-radius:2px"></div>
<div class="ab" style="left:491px;top:659px;width:5px;height:8px;border-left:1px solid #6b8fcf;border-right:1px solid #6b8fcf"></div><div class="ab" style="left:493px;top:659px;width:1px;height:8px;background:#6b8fcf"></div>
<div class="ab" style="left:1027px;top:656px;width:1px;height:14px;background:#b0b0b0"></div>
<svg class="ab" style="left:1032px;top:658px" width="6" height="10" viewBox="0 0 6 10"><path d="M0 0 L6 5 L0 10 Z" fill="#111"/></svg>
<div class="ab" style="left:1043px;top:656px;width:1px;height:14px;background:#b0b0b0"></div>
<div class="ab" style="left:1058px;top:138px;width:1px;height:139px;background:#7f91a6"></div>
<div class="ab" style="left:1058px;top:307px;width:1px;height:365px;background:#7f91a6"></div>
<div class="ab" style="left:359px;top:178px;width:331px;height:29px;border:3px solid #ee2a2a"></div>
<div class="ab" style="left:544px;top:282px;width:129px;height:25px;border:3px solid #ee2a2a"></div>
</body></html>
